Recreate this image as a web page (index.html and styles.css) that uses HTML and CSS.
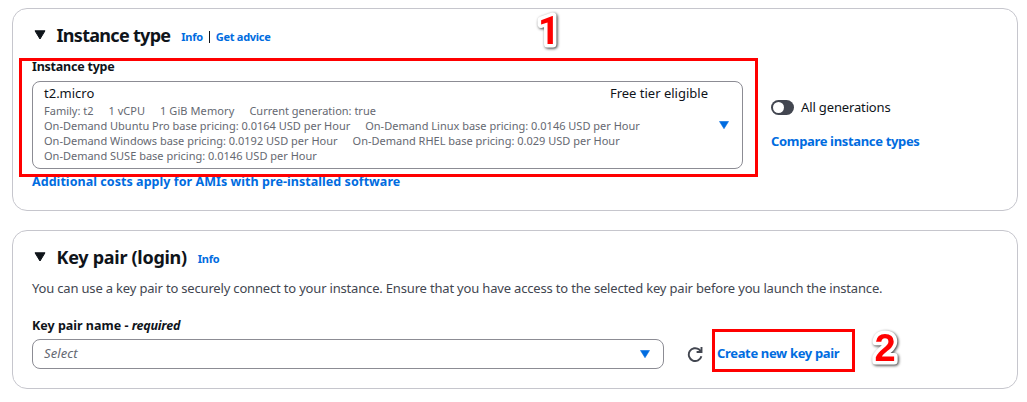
FILE: index.html
```html
<!DOCTYPE html>
<html lang="en">
<head>
<meta charset="utf-8">
<title>Launch an instance</title>
<link rel="stylesheet" href="styles.css">
</head>
<body>
<main class="page">
  <section class="card card-instance">
    <header class="card-header">
      <svg class="toggle-caret" viewBox="0 0 12 10"><path d="M1 .8h10L6 9z"/></svg>
      <h2 class="title"><span class="t-title1">Instance type</span></h2>
      <span class="header-links"><a class="t-info">Info</a><i class="divider"></i><a class="t-advice">Get advice</a></span>
    </header>
    <div class="instance-row">
      <div class="instance-main">
        <div class="label"><span class="t-label1">Instance type</span></div>
        <div class="select select-large">
          <div class="option">
            <div class="option-head"><span class="t-micro">t2.micro</span><span class="t-free">Free tier eligible</span></div>
            <div class="tags"><span>Family: t2</span><span>1 vCPU</span><span class="t-mem">1 GiB Memory</span><span>Current generation: true</span></div>
            <div class="tags"><span>On-Demand Ubuntu Pro base pricing: 0.0164 USD per Hour</span><span>On-Demand Linux base pricing: 0.0146 USD per Hour</span></div>
            <div class="tags"><span>On-Demand Windows base pricing: 0.0192 USD per Hour</span><span>On-Demand RHEL base pricing: 0.029 USD per Hour</span></div>
            <div class="tags"><span>On-Demand SUSE base pricing: 0.0146 USD per Hour</span></div>
          </div>
          <svg class="caret" viewBox="0 0 10 8"><path d="M.5.5h9L5 7.7z"/></svg>
        </div>
        <div class="link below"><a class="t-costs">Additional costs apply for AMIs with pre-installed software</a></div>
      </div>
      <div class="instance-side">
        <div class="switch-row"><span class="switch"></span><span class="t-all">All generations</span></div>
        <div class="link"><a class="t-compare">Compare instance types</a></div>
      </div>
    </div>
  </section>

  <section class="card card-key">
    <header class="card-header">
      <svg class="toggle-caret" viewBox="0 0 12 10"><path d="M1 .8h10L6 9z"/></svg>
      <h2 class="title"><span class="t-title2">Key pair (login)</span></h2>
      <span class="header-links"><a class="t-info">Info</a></span>
    </header>
    <p class="description">You can use a key pair to securely connect to your instance. Ensure that you have access to the selected key pair before you launch the instance.</p>
    <div class="label key-label">Key pair name - <em class="t-required">required</em></div>
    <div class="key-row">
      <div class="select select-small"><em class="t-select">Select</em><svg class="caret" viewBox="0 0 10 8"><path d="M.5.5h9L5 7.7z"/></svg></div>
      <svg class="refresh" viewBox="0 0 16 16"><path d="M14.4 10.2A6.4 6.4 0 1 1 12.2 3.6l1.9 2M14.5 1v5H9.6"/></svg>
      <a class="link t-create">Create new key pair</a>
    </div>
  </section>

  <div class="mark mark-one"></div>
  <div class="mark mark-two"></div>
  <svg class="number number-one" viewBox="0 0 40 48"><text x="20" y="36" text-anchor="middle">1</text></svg>
  <svg class="number number-two" viewBox="0 0 40 48"><text x="20" y="36" text-anchor="middle">2</text></svg>
</main>
</body>
</html>
```
FILE: styles.css
```css
* { box-sizing: border-box; }
body { margin: 0; background: #fff; color: #0f141a; font: 13px/20px "Noto Sans", sans-serif; }
.page { position: relative; width: 1027px; height: 402px; padding: 8px 9px 0 12px; overflow: hidden; display: flex; flex-direction: column; gap: 19px; white-space: nowrap; }
.card { border: 1px solid #c6c6cd; border-radius: 15px; padding: 13px 19px 0; }
.card-instance { height: 203px; }
.card-key { height: 159px; }
.card-header { display: flex; align-items: center; height: 26px; }
.toggle-caret { width: 12px; height: 10px; margin: 0 11px 0 1.5px; fill: #0f141a; stroke: #0f141a; stroke-linejoin: round; }
.title { margin: 0; font-size: 18px; line-height: 26px; font-weight: 700; }
.header-links { display: flex; align-items: center; margin: 4px 0 0 11px; font-size: 11px; font-weight: 700; color: #006ce0; }
.divider { width: 1px; height: 12px; margin: 0 6px 0 6px; background: #0f141a; }
.instance-row { display: flex; gap: 28px; }
.instance-main { width: 711px; }
.label { height: 20px; margin-top: 9px; margin-bottom: 4px; font-size: 12.5px; font-weight: 700; }
.select { display: flex; align-items: center; justify-content: space-between; border: 1px solid #8c8c94; border-radius: 8px; }
.select-large { height: 88px; padding: 0 13px 0 11px; }
.option { width: 664px; margin-top: -4px; font-size: 11px; line-height: 15px; color: #656871; }
.option-head { display: flex; justify-content: space-between; height: 20px; font-size: 13px; line-height: 20px; color: #0f141a; }
.tags { display: flex; gap: 15px; height: 15px; }
.caret { width: 10px; height: 8px; margin-top: -1px; fill: #006ce0; stroke: #006ce0; stroke-width: .6; stroke-linejoin: round; }
.link { color: #006ce0; font-weight: 700; }
.below { margin-top: 3px; font-size: 12.5px; }
.instance-side { padding-top: 50px; display: flex; flex-direction: column; gap: 14px; }
.switch-row { display: flex; align-items: center; gap: 7px; }
.switch { width: 23px; height: 15px; padding: 2px; border-radius: 8px; background: #424650; }
.switch::before { content: ""; display: block; width: 11px; height: 11px; border-radius: 50%; background: #fff; }
.t-all { letter-spacing: -.14px; margin-top: -1px; }
.description { margin: 8px 0 0; color: #424650; letter-spacing: -.178px; }
.key-label { margin-top: 18px; margin-bottom: 3px; }
.key-row { display: flex; align-items: center; }
.select-small { width: 632px; height: 30px; padding: 0 13px 2px 11px; color: #656871; }
.select-small .caret { margin-top: 2px; }
.refresh { width: 16px; height: 16px; margin: 0 14px 0 23px; fill: none; stroke: #424650; stroke-width: 1.9; }
.t-title1 { letter-spacing: -.7px; }
.t-title2 { letter-spacing: -.28px; }
.t-info { letter-spacing: -.3px; }
.t-advice { letter-spacing: -.27px; }
.t-label1 { letter-spacing: -.22px; }
.t-required { letter-spacing: -.2px; }
.t-mem { letter-spacing: .1px; }
.t-costs { letter-spacing: .05px; }
.t-compare { letter-spacing: -.34px; }
.t-create { margin-top: -2px; letter-spacing: -.34px; }
.t-select { letter-spacing: .1px; }

.mark { position: absolute; border: 3px solid #f00; }
.mark-one { left: 19px; top: 58px; width: 739px; height: 119px; }
.mark-two { left: 712px; top: 329px; width: 143px; height: 43px; }
.number { position: absolute; width: 40px; height: 48px; overflow: visible; fill: #f00; stroke: #fff; stroke-width: 7px; stroke-linejoin: round; paint-order: stroke; font: 700 38px "Liberation Sans", sans-serif; filter: drop-shadow(1px 1px 1.5px rgba(0,0,0,.8)); }
.number-one { left: 529px; top: 8px; font-family: Roboto, sans-serif; }
.number-two { left: 865px; top: 325px; }
```
